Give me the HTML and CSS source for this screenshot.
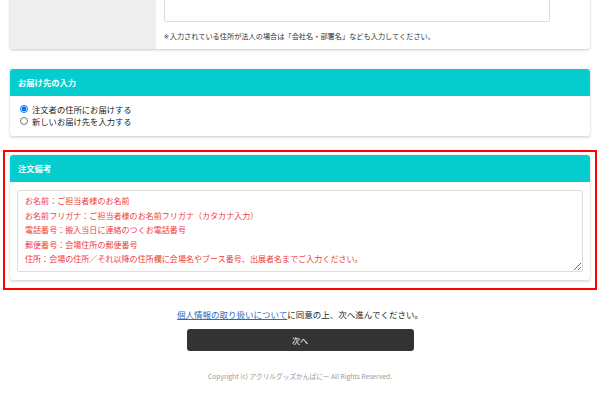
FILE: index.html
```html
<!DOCTYPE html>
<html lang="ja">
<head>
  <meta charset="UTF-8">
  <title>ご注文手続き</title>
  <link rel="stylesheet" href="styles.css">
</head>
<body>
  <div class="page">
    <div class="card address">
      <div class="address-label"></div>
      <div class="address-body">
        <textarea class="address-input"></textarea>
        <p class="note"><span class="mark">※</span>入力されている住所が法人の場合は「会社名・部署名」なども入力してください。</p>
      </div>
    </div>

    <div class="card delivery">
      <div class="card-head">お届け先の入力</div>
      <div class="card-body radios">
        <label><input type="radio" name="dest" checked> 注文者の住所にお届けする</label>
        <label><input type="radio" name="dest"> 新しいお届け先を入力する</label>
      </div>
    </div>

    <div class="highlight">
      <div class="card remarks">
        <div class="card-head">注文備考</div>
        <div class="card-body">
          <textarea class="remarks-input">お名前：ご担当者様のお名前
お名前フリガナ：ご担当者様のお名前フリガナ（カタカナ入力）
電話番号：搬入当日に連絡のつくお電話番号
郵便番号：会場住所の郵便番号
住所：会場の住所／それ以降の住所欄に会場名やブース番号、出展者名までご入力ください。</textarea>
        </div>
      </div>
    </div>

    <p class="agree"><a href="#">個人情報の取り扱いについて</a>に同意の上、次へ進んでください。</p>
    <button class="next">次へ</button>
    <p class="copy">Copyright (c) アクリルグッズかんばにー All Rights Reserved.</p>
  </div>
</body>
</html>
```

FILE: styles.css
```css
body {
  margin: 0;
  background: #fff;
  color: #333;
  font-family: "Noto Sans CJK JP", "Noto Sans", sans-serif;
}
.page {
  margin-top: -40px;
  display: flex;
  flex-direction: column;
  align-items: center;
}
.card {
  width: 580px;
  background: #fff;
  border-radius: 3px;
  box-shadow: 0 1px 3px rgba(0, 0, 0, 0.22);
}
.address {
  display: flex;
  margin-left: -1px;
}
.address-label {
  width: 146px;
  background: #eee;
  border-radius: 3px 0 0 3px;
}
.address-body {
  flex: 1;
  padding: 0 40px 0 8px;
}
.address-input {
  display: block;
  width: 100%;
  height: 62px;
  box-sizing: border-box;
  border: 1px solid #ddd;
  border-radius: 2px;
  resize: none;
}
.note {
  margin: 0;
  padding: 9px 0 7px;
  height: 11px;
  font-size: 7.2px;
  line-height: 11px;
  color: #333;
}
.note .mark {
  font-family: "DejaVu Sans", sans-serif;
  font-size: 6.8px;
  line-height: 0;
  margin-right: 0.5px;
}
.card-head {
  background: #05cdcd;
  color: #fff;
  font-size: 8.3px;
  font-weight: bold;
  height: 27px;
  line-height: 27px;
  padding: 0 8px;
  border-radius: 3px 3px 0 0;
}
.delivery {
  margin-top: 20px;
}
.radios {
  display: flex;
  flex-direction: column;
  padding: 7px 9px 9px;
  font-size: 8.3px;
  line-height: 12px;
  color: #222;
}
.radios label {
  display: flex;
  align-items: center;
}
.radios input {
  width: 8px;
  height: 8px;
  margin: 0 4px 0 1px;
}
.highlight {
  margin-top: 14px;
  width: 590px;
  border: 2px solid #f00;
  padding: 3px 0 8px;
  display: flex;
  justify-content: center;
}
.remarks .card-body {
  padding: 8px 7px 8px;
}
.remarks-input {
  display: block;
  width: 100%;
  height: 82px;
  box-sizing: border-box;
  border: 1px solid #ddd;
  border-radius: 2px;
  padding: 3px 7px;
  font-family: "Noto Sans CJK JP", "Noto Sans", sans-serif;
  font-size: 8.05px;
  line-height: 14.5px;
  color: #f03c3c;
  overflow: hidden;
}
.agree {
  margin: 18px 0 0;
  font-size: 8.5px;
  line-height: 12px;
  color: #222;
}
.agree a {
  color: #2a6cc0;
}
.next {
  margin-top: 9px;
  width: 227px;
  height: 22px;
  border: none;
  border-radius: 3px;
  background: #333;
  color: #fff;
  font-family: "Noto Sans CJK JP", "Noto Sans", sans-serif;
  font-size: 8px;
  cursor: pointer;
}
.copy {
  margin: 20px 0 0;
  font-size: 6.7px;
  color: #999;
}
```
